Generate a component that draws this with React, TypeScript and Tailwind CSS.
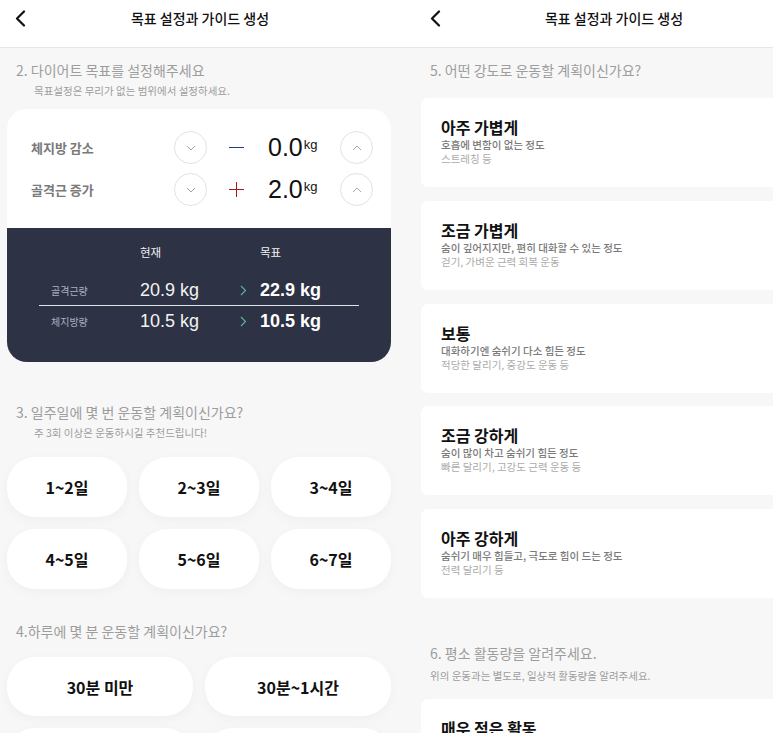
const KR = "font-['Noto_Sans_CJK_KR','Noto_Sans',sans-serif]";
const NUM = "font-['Liberation_Sans','Noto_Sans_CJK_KR',sans-serif]";

function BackIcon() {
  return (
    <svg width="11" height="17" viewBox="0 0 11 17" fill="none">
      <path d="M9 1.5L2 8.5L9 15.5" stroke="#111" strokeWidth="2.2" strokeLinecap="round" strokeLinejoin="round" />
    </svg>
  );
}

function Header({ offset }: { offset: string }) {
  return (
    <div className="h-12 shrink-0 bg-white border-b border-[#e6e6e6] relative">
      <div className={`absolute top-[10px] ${offset}`}>
        <BackIcon />
      </div>
      <div className="w-[400px] pt-[8px] text-center text-[14px] leading-[20px] font-medium text-[#111]">목표 설정과 가이드 생성</div>
    </div>
  );
}

function RoundBtn({ up }: { up?: boolean }) {
  return (
    <div className="w-[33px] h-[33px] shrink-0 rounded-full border border-[#e2e2e2] flex items-center justify-center">
      <svg width="10" height="6" viewBox="0 0 10 6" fill="none">
        {up ? (
          <path d="M1 5L5 1L9 5" stroke="#9a9a9a" strokeWidth="0.9" />
        ) : (
          <path d="M1 1L5 5L9 1" stroke="#9a9a9a" strokeWidth="0.9" />
        )}
      </svg>
    </div>
  );
}

function GoalRow({ label, sign, value }: { label: string; sign: "minus" | "plus"; value: string }) {
  return (
    <div className="flex items-center h-[33px]">
      <div className="w-[143px] text-[13px] font-bold text-[#7a7a7a]">{label}</div>
      <RoundBtn />
      <div className="w-[133px] flex items-center">
        <div className="ml-[22px] w-[15px] h-[15px] relative">
          <div className={`absolute left-0 right-0 top-[7px] h-[1px] ${sign === "minus" ? "bg-[#1c3d8f]" : "bg-[#a81818]"}`} />
          {sign === "plus" && <div className="absolute top-0 bottom-0 left-[7px] w-[1px] bg-[#a81818]" />}
        </div>
        <div className="ml-[24px] flex items-start">
          <span className={`${NUM} text-[25px] leading-none text-[#111]`}>{value}</span>
          <span className={`${NUM} text-[13px] leading-none text-[#111] ml-[1px] mt-[3px]`}>kg</span>
        </div>
      </div>
      <RoundBtn up />
    </div>
  );
}

function CompareRow({ label, now, goal }: { label: string; now: string; goal: string }) {
  return (
    <div className="grid grid-cols-[101px_100px_20px_1fr] items-center h-[30px]">
      <div className="pl-[12px] text-[10px] text-[#aab0c2]">{label}</div>
      <div className={`${NUM} text-[18px] text-[#f2f2f2]`}>{now}</div>
      <svg width="7" height="11" viewBox="0 0 7 11" fill="none">
        <path d="M1 1L5.5 5.5L1 10" stroke="#5db59a" strokeWidth="1.1" />
      </svg>
      <div className={`${NUM} text-[18px] font-bold text-white`}>{goal}</div>
    </div>
  );
}

function Pill({ text }: { text?: string }) {
  return (
    <div className="h-full rounded-[28px] bg-white shadow-[0_3px_12px_rgba(0,0,0,0.035)] flex items-center justify-center text-[16px] font-bold text-[#111]">
      {text}
    </div>
  );
}

function IntensityCard({ title, d1, d2 }: { title: string; d1?: string; d2?: string }) {
  return (
    <div className="h-[89px] shrink-0 rounded-[7px] bg-white pl-[20px] pt-[18px]">
      <div className="text-[16px] leading-[22px] font-bold text-[#111]">{title}</div>
      {d1 && <div className="text-[10.5px] leading-[14px] font-medium text-[#7a7a7a]">{d1}</div>}
      {d2 && <div className="text-[10.5px] leading-[14px] text-[#ababab]">{d2}</div>}
    </div>
  );
}

export default function App() {
  return (
    <div className={`${KR} flex w-[773px] h-[733px] overflow-hidden bg-[#f7f7f7]`}>
      {/* left screen */}
      <div className="w-[414px] shrink-0 flex flex-col">
        <Header offset="left-[15px]" />
        <div className="pl-[7px] pr-[23px]">
          <div className="pl-[9px] mt-[12px] text-[14px] leading-[20px] text-[#9d9d9d]">2. 다이어트 목표를 설정해주세요</div>
          <div className="pl-[27px] mt-[3px] text-[10.5px] leading-[16px] text-[#9d9d9d]">목표설정은 무리가 없는 범위에서 설정하세요.</div>

          <div className="mt-[10px] rounded-[20px] bg-white overflow-hidden">
            <div className="pl-[24px] pt-[22px] pb-[22px] flex flex-col gap-[9px]">
              <GoalRow label="체지방 감소" sign="minus" value="0.0" />
              <GoalRow label="골격근 증가" sign="plus" value="2.0" />
            </div>
            <div className="bg-[#2d3245] px-[32px] pt-[16px] pb-[26px]">
              <div className="grid grid-cols-[101px_120px_1fr] h-[18px] items-center text-[11.5px] text-[#f0f0f0]">
                <div />
                <div>현재</div>
                <div>목표</div>
              </div>
              <div className="mt-[13px]">
                <CompareRow label="골격근량" now="20.9 kg" goal="22.9 kg" />
              </div>
              <div className="h-[1px] bg-[#dfe3ea]" />
              <CompareRow label="체지방량" now="10.5 kg" goal="10.5 kg" />
            </div>
          </div>

          <div className="pl-[9px] mt-[40px] text-[14px] leading-[20px] text-[#9d9d9d]">3. 일주일에 몇 번 운동할 계획이신가요?</div>
          <div className="pl-[27px] mt-[3px] text-[10.5px] leading-[16px] text-[#9d9d9d]">주 3회 이상은 운동하시길 추천드립니다!</div>
          <div className="mt-[16px] grid grid-cols-3 gap-x-[12px] gap-y-[12px] auto-rows-[60px]">
            {["1~2일", "2~3일", "3~4일", "4~5일", "5~6일", "6~7일"].map((t) => (
              <Pill key={t} text={t} />
            ))}
          </div>

          <div className="pl-[9px] mt-[32px] text-[14px] leading-[20px] text-[#9d9d9d]">4.하루에 몇 분 운동할 계획이신가요?</div>
          <div className="mt-[16px] grid grid-cols-2 gap-x-[12px] gap-y-[12px] auto-rows-[59px]">
            <Pill text="30분 미만" />
            <Pill text="30분~1시간" />
            <Pill />
            <Pill />
          </div>
        </div>
      </div>

      {/* right screen */}
      <div className="w-[398px] shrink-0 flex flex-col">
        <Header offset="left-[16px]" />
        <div className="pl-[7px]">
          <div className="pl-[9px] mt-[12px] text-[14px] leading-[20px] text-[#9d9d9d]">5. 어떤 강도로 운동할 계획이신가요?</div>
          <div className="mt-[18px] flex flex-col gap-[13.75px]">
            <IntensityCard title="아주 가볍게" d1="호흡에 변함이 없는 정도" d2="스트레칭 등" />
            <IntensityCard title="조금 가볍게" d1="숨이 깊어지지만, 편히 대화할 수 있는 정도" d2="걷기, 가벼운 근력 회복 운동" />
            <IntensityCard title="보통" d1="대화하기엔 숨쉬기 다소 힘든 정도" d2="적당한 달리기, 중강도 운동 등" />
            <IntensityCard title="조금 강하게" d1="숨이 많이 차고 숨쉬기 힘든 정도" d2="빠른 달리기, 고강도 근력 운동 등" />
            <IntensityCard title="아주 강하게" d1="숨쉬기 매우 힘들고, 극도로 힘이 드는 정도" d2="전력 달리기 등" />
          </div>

          <div className="pl-[9px] mt-[45px] text-[14px] leading-[20px] text-[#9d9d9d]">6. 평소 활동량을 알려주세요.</div>
          <div className="pl-[9px] mt-[5px] text-[10.5px] leading-[16px] text-[#9d9d9d]">위의 운동과는 별도로, 일상적 활동량을 알려주세요.</div>
          <div className="mt-[15px]">
            <IntensityCard title="매우 적은 활동" />
          </div>
        </div>
      </div>
    </div>
  );
}
